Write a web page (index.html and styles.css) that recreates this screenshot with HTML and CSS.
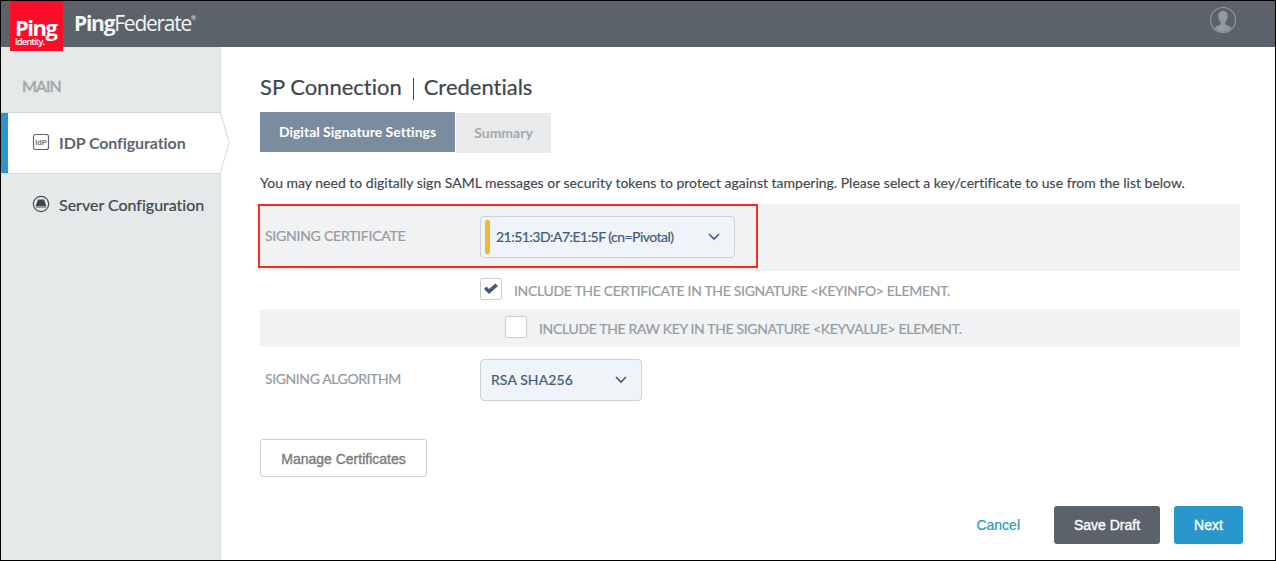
FILE: index.html
```html
<!DOCTYPE html>
<html lang="en">
<head>
<meta charset="utf-8">
<title>PingFederate</title>
<link rel="stylesheet" href="styles.css">
</head>
<body>
<div class="app">
  <header class="topbar">
    <div class="logo"><span class="logo-name">Ping</span><span class="logo-sub">Identity.</span></div>
    <div class="product"><span><b>Ping</b>Federate</span><sup>®</sup></div>
    <svg class="avatar" viewBox="0 0 28 28" width="28" height="28"><circle cx="14" cy="14" r="12.500" fill="none" stroke="#9299a0" stroke-width="1.200"/><path d="M14 5c-3.300 0-4.900 2-4.700 5 .1 2.800 1 4.700 2.400 6v2.200c-.8 1.300-4.300 1.800-6.200 3.600 2 2.600 5 4.200 8.500 4.200s6.500-1.600 8.500-4.200c-1.900-1.800-5.400-2.300-6.200-3.600V16c1.400-1.300 2.300-3.200 2.400-6 .2-3-1.400-5-4.700-5z" fill="#9299a0"/></svg>
  </header>
  <div class="body">
    <nav class="sidebar">
      <div class="nav-head">MAIN</div>
      <div class="nav-item active">
        <svg class="nav-icon" width="18" height="18" viewBox="0 0 18 18"><rect x="1.500" y="1.500" width="15" height="15" rx="2" fill="none" stroke="#60666d" stroke-width="1.200"/><text x="9" y="11.500" text-anchor="middle" class="idp">IdP</text></svg>
        <span>IDP Configuration</span>
        <svg class="arrow" width="10" height="61" viewBox="0 0 10 61"><path d="M0 .5 9.300 30.500 0 60.500z" fill="#fff"/><path d="M.3 .5 9.300 30.500 .3 60.500" fill="none" stroke="#d3d8d9"/></svg>
      </div>
      <div class="nav-item server">
        <svg class="nav-icon" width="18" height="18" viewBox="0 0 18 18"><circle cx="9" cy="9" r="7.700" fill="none" stroke="#4a5057" stroke-width="1.200"/><path d="M6 4.500h6l2.300 6.500H3.700z" fill="#3f464d"/><path d="M3.700 11h10.600v2H3.700z" fill="#979ca0"/></svg>
        <span>Server Configuration</span>
      </div>
    </nav>
    <main class="content">
      <h1 class="title"><span>SP Connection</span><i class="divider"></i><span>Credentials</span></h1>
      <div class="tabs"><div class="tab on">Digital Signature Settings</div><div class="tab">Summary</div></div>
      <p class="intro">You may need to digitally sign SAML messages or security tokens to protect against tampering. Please select a key/certificate to use from the list below.</p>
      <div class="row cert">
        <label class="label cert-label">SIGNING CERTIFICATE</label>
        <div class="select wide"><i class="marker"></i><span>21:51:3D:A7:E1:5F (cn=Pivotal)</span><svg class="chev" width="12" height="8" viewBox="0 0 12 8"><path d="M1 1l5 5 5-5"/></svg></div>
        <div class="highlight"></div>
      </div>
      <div class="row check"><span class="box"><svg width="14" height="12" viewBox="0 0 14 12"><path d="M0 6l2.500-2.500L5 6l6.500-5.500L14 3 5 11z" fill="#44597b"/></svg></span><span>INCLUDE THE CERTIFICATE IN THE SIGNATURE &lt;KEYINFO&gt; ELEMENT.</span></div>
      <div class="row check nested"><span class="box"></span><span>INCLUDE THE RAW KEY IN THE SIGNATURE &lt;KEYVALUE&gt; ELEMENT.</span></div>
      <div class="row algo">
        <label class="label algo-label">SIGNING ALGORITHM</label>
        <div class="select"><span>RSA SHA256</span><svg class="chev" width="12" height="8" viewBox="0 0 12 8"><path d="M1 1l5 5 5-5"/></svg></div>
      </div>
      <button class="btn manage">Manage Certificates</button>
      <div class="actions"><a class="cancel">Cancel</a><button class="btn save">Save Draft</button><button class="btn next">Next</button></div>
    </main>
  </div>
</div>
</body>
</html>
```
FILE: styles.css
```css
* { box-sizing: border-box; }
body { margin: 0; background: #fff; font-family: Lato, "Open Sans", sans-serif; color: #3f464d; font-variant-ligatures: none; }
.app { width: 1276px; height: 561px; border: 1px solid #000; display: flex; flex-direction: column; overflow: hidden; }
.topbar { height: 46px; flex: none; background: #5b6269; display: flex; align-items: flex-start; padding-left: 9px; color: #fff; }
.logo { width: 53px; height: 50px; background: #fe0d2b; display: flex; flex-direction: column; padding-left: 5px; z-index: 1; }
.logo-name { font: bold 22px/24px "Open Sans", sans-serif; margin-top: 14px; letter-spacing: -1.5px; height: 22px; }
.logo-sub { font: 9px/10px "Open Sans", sans-serif; letter-spacing: -.5px; -webkit-text-stroke: .2px; }
.product { font: 21px/30px "Open Sans", sans-serif; margin: 7px 0 0 11px; letter-spacing: -1.25px; display: flex; color: #f4f5f5; }
.product sup { font-size: 6px; line-height: 20px; }
.avatar { margin: 5px 38px 0 auto; }
.body { flex: 1; display: flex; }
.sidebar { width: 220px; background: #e5e9e9; border-right: 1px solid #d8dddd; }
.nav-head { padding: 28px 0 0 21px; height: 65px; font-size: 16px; line-height: 22px; color: #a2a7aa; letter-spacing: -.9px; -webkit-text-stroke: .5px; }
.nav-item { height: 62px; padding-left: 31px; display: flex; align-items: center; gap: 9px; font-size: 16px; -webkit-text-stroke: .2px; }
.nav-item span { margin-top: -2px; }
.active { position: relative; height: 62px; margin-right: -1px; background: #fff; border: solid #d3d8d9; border-width: 1px 0; box-shadow: inset 7px 0 #2996cc; font-weight: bold; color: #60666d; letter-spacing: -.09px; -webkit-text-stroke: 0; }
.active .nav-icon { margin-top: -3px; }
.server .nav-icon { margin-top: -2px; }
.arrow { position: absolute; left: 219px; top: -1px; }
.idp { font: bold 7.500px "Liberation Sans", sans-serif; fill: #71777d; letter-spacing: 0; }
.content { flex: 1; padding: 25px 32px 0 39px; }
.title { margin: 0; height: 40px; display: flex; font-size: 22px; line-height: 30px; font-weight: 400; -webkit-text-stroke: .2px; }
.divider { width: 1px; height: 22px; background: #3f464d; margin: 6px 10px 0 11px; }
.tabs { display: flex; gap: 1px; font-size: 14px; font-weight: bold; line-height: 39px; }
.tab { width: 95px; height: 40px; margin-top: 1px; background: #e8eaeb; color: #a4a9ac; text-align: center; }
.tab.on { width: 195px; margin-top: 0; background: #7b8c9e; color: #fff; }
.intro { margin: 20px 0 0; height: 31px; font-size: 14px; line-height: 20px; white-space: nowrap; -webkit-text-stroke: .15px; }
.row { width: 980px; display: flex; -webkit-text-stroke: .2px; }
.cert { height: 67px; background: #f1f2f4; position: relative; padding-top: 12px; }
.highlight { position: absolute; left: -2px; top: 0; width: 500px; height: 64px; border: 2px solid #f82c20; }
.label { width: 220px; padding-left: 5px; font-size: 14px; line-height: 40px; color: #959b9f; }
.cert-label { letter-spacing: -.24px; }
.algo-label { letter-spacing: -.4px; }
.select { width: 162px; height: 42px; border: 1px solid #cdd2d5; border-radius: 4px; background: #eef4f7; color: #44597b; font-size: 14px; line-height: 40px; padding: 0 14px 0 10px; display: flex; align-items: center; letter-spacing: .1px; }
.wide { width: 255px; padding-left: 4px; letter-spacing: -.53px; }
.marker { width: 5px; height: 34px; border-radius: 2px; background: #f1b82d; margin-right: 6px; }
.chev { margin-left: auto; fill: none; stroke: #44597b; stroke-width: 1.600; }
.check { height: 38px; padding: 7px 0 0 220px; font-size: 14px; line-height: 26px; color: #959b9f; gap: 12px; letter-spacing: -.32px; }
.nested { background: #f1f2f4; padding-left: 245px; letter-spacing: -.34px; }
.box { width: 22px; height: 22px; background: #fff; border: 1px solid #c9cdd0; border-radius: 2px; display: flex; justify-content: center; padding-top: 4px; }
.algo { padding-top: 12px; height: 92px; }
.btn { border: 0; border-radius: 3px; height: 38px; font: 14px/36px "Liberation Sans", sans-serif; padding: 0; color: #fff; -webkit-text-stroke: .35px; }
.manage { width: 167px; border: 1px solid #c9cdd0; background: #fff; color: #767b80; padding-top: 2px; line-height: 34px; }
.actions { display: flex; justify-content: flex-end; margin-top: 29px; font: 14px/38px "Liberation Sans", sans-serif; }
.cancel { color: #2996cc; margin-right: 34px; -webkit-text-stroke: .2px; }
.save { width: 106px; background: #5b6269; margin-right: 14px; }
.next { width: 69px; background: #2996cc; }
```
